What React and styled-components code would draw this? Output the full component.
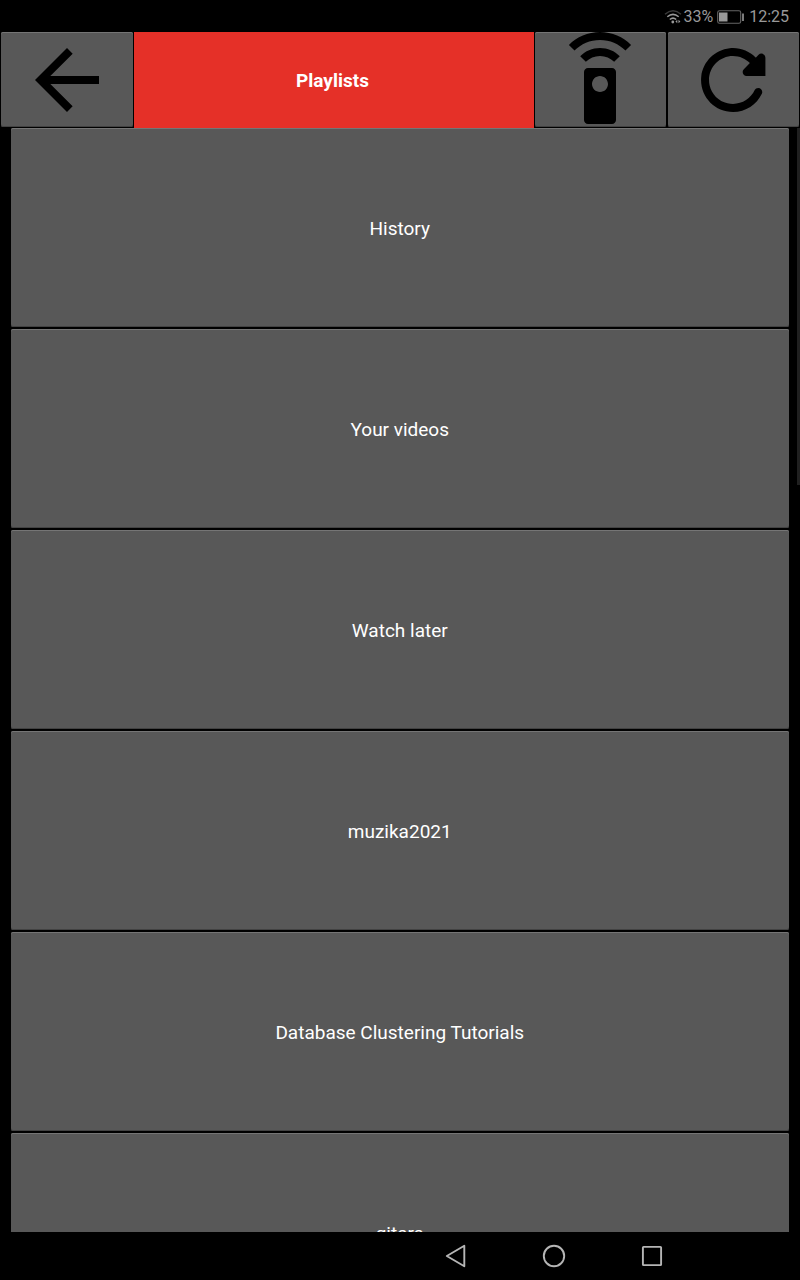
import React from "react";
import styled, { createGlobalStyle } from "styled-components";

const GlobalStyle = createGlobalStyle`
  * { box-sizing: border-box; }
  body { margin: 0; background: #000; overflow: hidden; }
`;

const Screen = styled.div`
  width: 800px;
  height: 1280px;
  display: flex;
  flex-direction: column;
  background: #000;
  color: #fff;
  font-family: Roboto, sans-serif;
  overflow: hidden;
`;

const StatusBar = styled.div`
  height: 32px;
  flex: none;
  display: flex;
  align-items: center;
  justify-content: flex-end;
  padding: 1px 11px 0 0;
  color: #999;
  font-size: 16px;
`;

const WifiIcon = styled.svg`
  width: 18px;
  height: 16px;
  margin-right: 1px;
`;

const BatteryIcon = styled.svg`
  width: 28px;
  height: 14px;
  margin: 0 4px 0 4px;
`;

const Header = styled.header`
  height: 96px;
  flex: none;
  display: grid;
  grid-template-columns: 133.5px 400px 133px 133.5px;
`;

const Key = styled.button`
  display: flex;
  align-items: center;
  justify-content: center;
  margin: 0 1px 1px;
  padding: 0;
  border: 0;
  border-radius: 2px;
  background: #585858;
  box-shadow: inset 0 1px #757575, inset 0 -1px #424242;
  color: #fff;
  font: 400 19px/22px Roboto, sans-serif;
`;

const Title = styled.h1`
  margin: 0;
  display: flex;
  align-items: center;
  justify-content: center;
  background: #e53028;
  font-size: 19px;
  font-weight: 700;
  padding: 1px 2px 0 0;
`;

const KeyIcon = styled.svg`
  display: block;
  width: 96px;
  height: 96px;
  flex: none;
  fill: #000;
  margin-bottom: -1px;
`;

const Body = styled.main`
  height: 1104px;
  flex: none;
  display: flex;
  overflow: hidden;
`;

const List = styled.div`
  width: 798px;
  display: flex;
  flex-direction: column;
  gap: 2.5px;
  padding: 0 9px 0 11px;
`;

const PlaylistRow = styled(Key)`
  flex: none;
  height: 198.5px;
  margin: 0;
  padding: 2.5px 0.5px 0 0;
`;

const ScrollThumb = styled.div`
  width: 3px;
  margin-left: -1px;
  height: 357px;
  background: #202020;
`;

const NavBar = styled.nav`
  height: 48px;
  flex: none;
  display: flex;
  align-items: center;
  gap: 74px;
  padding-left: 444px;
`;

const NavIcon = styled.svg`
  width: 24px;
  height: 24px;
  fill: none;
  stroke: #b5b5b5;
  stroke-width: 1.9;
  stroke-linejoin: round;
`;

const playlists = [
  "History",
  "Your videos",
  "Watch later",
  "muzika2021",
  "Database Clustering Tutorials",
  "gitara",
];

export default function App() {
  return (
    <Screen>
      <GlobalStyle />
      <StatusBar>
        <WifiIcon viewBox="0 0 18 16" fill="none" strokeWidth="1.5">
          <path d="M1 5.2Q9-1.6 17 5.2" stroke="#3b3b3b" />
          <path d="M3.3 7.8Q9 3 14.7 7.8" stroke="#999" />
          <path d="M5.8 10.5Q9 7.8 12.2 10.5" stroke="#999" />
          <circle cx="8.8" cy="13" r="1.4" fill="#999" />
          <path d="M13.3 10.7 11.4 12.5 13.3 14.3ZM14.5 10.7 16.4 12.5 14.5 14.3Z" fill="#999" />
        </WifiIcon>
        <span>33%</span>
        <BatteryIcon viewBox="0 0 28 14">
          <rect x=".7" y=".7" width="23" height="12.6" rx="1.8" fill="none" stroke="#666" strokeWidth="1.1" />
          <rect x="2" y="2.5" width="8.5" height="9" fill="#999" />
          <rect x="25.2" y="3.5" width="1.6" height="7.5" fill="#999" />
        </BatteryIcon>
        <span>12:25</span>
      </StatusBar>
      <Header>
        <Key aria-label="Back">
          <KeyIcon viewBox="0 0 24 24">
            <path d="M20 11H7.83l5.59-5.59L12 4l-8 8 8 8 1.41-1.41L7.83 13H20v-2z" />
          </KeyIcon>
        </Key>
        <Title>Playlists</Title>
        <Key aria-label="Remote">
          <KeyIcon viewBox="0 0 24 24">
            <path d="M15 9H9c-.55 0-1 .45-1 1v12c0 .55.45 1 1 1h6c.55 0 1-.45 1-1V10c0-.55-.45-1-1-1zm-3 6c-1.1 0-2-.9-2-2s.9-2 2-2 2 .9 2 2-.9 2-2 2zM7.05 6.05l1.41 1.41C9.37 6.56 10.62 6 12 6s2.63.56 3.54 1.46l1.41-1.41C15.68 4.78 13.93 4 12 4s-3.68.78-4.95 2.05zM12 0C8.96 0 6.21 1.23 4.22 3.22l1.41 1.41C7.26 3.01 9.51 2 12 2s4.74 1.01 6.36 2.64l1.41-1.41C17.79 1.23 15.04 0 12 0z" />
          </KeyIcon>
        </Key>
        <Key aria-label="Refresh">
          <KeyIcon viewBox="0 0 24 24">
            <path d="M17.65 6.35c-1.63-1.63-3.94-2.57-6.48-2.31-3.67.37-6.69 3.35-7.1 7.02C3.52 15.91 7.27 20 12 20c3.19 0 5.93-1.87 7.21-4.56.32-.67-.16-1.44-.9-1.44-.37 0-.72.2-.88.53-1.13 2.43-3.84 3.97-6.8 3.31-2.22-.49-4.01-2.3-4.48-4.52C5.31 9.44 8.26 6 12 6c1.66 0 3.14.69 4.22 1.78l-1.51 1.51c-.63.63-.19 1.71.7 1.71H20.1V6.41c0-.89-1.08-1.34-1.71-.71l-.64.65z" />
          </KeyIcon>
        </Key>
      </Header>
      <Body>
        <List>
          {playlists.map((name) => (
            <PlaylistRow key={name}>{name}</PlaylistRow>
          ))}
        </List>
        <ScrollThumb />
      </Body>
      <NavBar>
        <NavIcon viewBox="0 0 24 24">
          <path d="M20.3 1.8V22.2L2.8 12Z" />
        </NavIcon>
        <NavIcon viewBox="0 0 24 24">
          <circle cx="12" cy="12" r="10.2" />
        </NavIcon>
        <NavIcon viewBox="0 0 24 24">
          <rect x="2.9" y="2.9" width="18.2" height="18.2" rx=".7" />
        </NavIcon>
      </NavBar>
    </Screen>
  );
}
